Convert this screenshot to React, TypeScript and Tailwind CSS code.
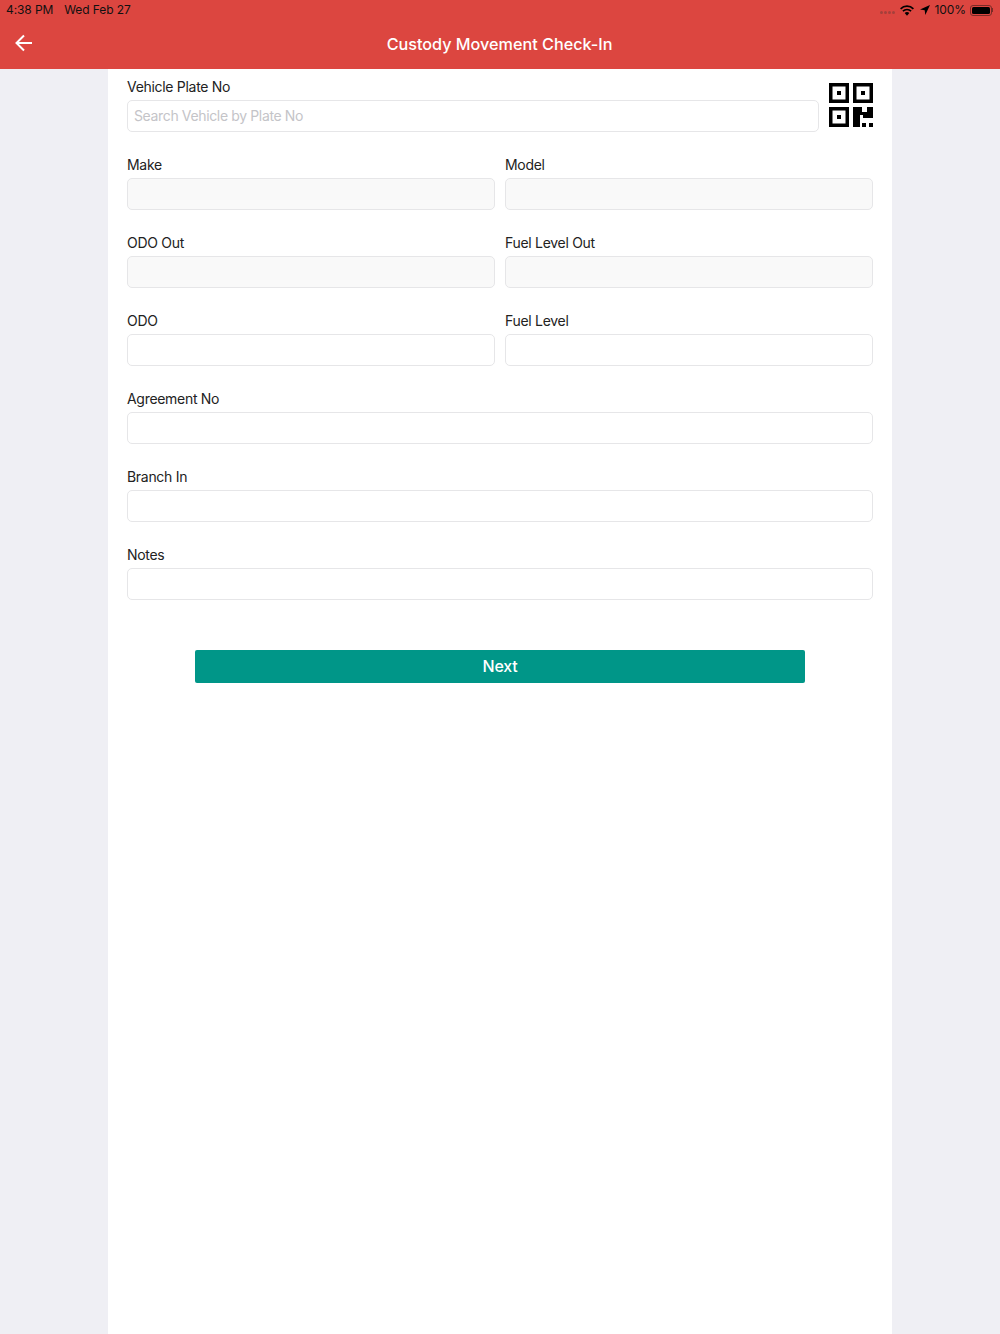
function Field({ label, className, disabled, placeholder }: {
  label: string;
  className?: string;
  disabled?: boolean;
  placeholder?: string;
}) {
  return (
    <div className={className}>
      <div className="h-[18px] text-[14px] leading-[18px] tracking-[-0.3px] text-[#222]">{label}</div>
      <div
        className={`mt-[4px] h-[32px] rounded-[5px] border border-[#e6e6e8] px-[6px] text-[14px] leading-[29px] tracking-[-0.36px] text-[#c4c4c8] ${disabled ? 'bg-[#f9f9f9]' : 'bg-white'}`}
      >
        {placeholder}
      </div>
    </div>
  );
}

function QrIcon() {
  return (
    <svg width="44" height="44" viewBox="0 0 44 44" className="shrink-0">
      <path fillRule="evenodd" d="M0 0h20v20H0zM3.500 3.500v13h13v-13z" />
      <rect x="8" y="8" width="4" height="4" />
      <path fillRule="evenodd" d="M24 0h20v20H24zM27.500 3.500v13h13v-13z" />
      <rect x="32" y="8" width="4" height="4" />
      <path fillRule="evenodd" d="M0 24h20v20H0zM3.500 27.500v13h13v-13z" />
      <rect x="8" y="32" width="4" height="4" />
      <path d="M24 24h9v5h5v-5h6v11H34v-3h-3v12h-7z" />
      <rect x="33" y="40" width="4" height="4" />
      <rect x="40" y="40" width="4" height="4" />
    </svg>
  );
}

export default function App() {
  return (
    <div className="flex min-h-[1334px] flex-col bg-[#efeff4] font-['Inter','Liberation_Sans',sans-serif]">
      {/* Header */}
      <div className="h-[69px] bg-[#dc4640] pl-[6px] pr-[7px]">
        <div className="flex h-[20px] items-center justify-between text-[12px] tracking-[-0.1px] text-[#111]">
          <div className="flex gap-[11px]">
            <span>4:38 PM</span>
            <span>Wed Feb 27</span>
          </div>
          <div className="flex items-center">
            <div className="mr-[5px] mt-[5px] flex gap-[1.5px]">
              <span className="h-[2.5px] w-[2.5px] rounded-full bg-[#a5403b]" />
              <span className="h-[2.5px] w-[2.5px] rounded-full bg-[#a5403b]" />
              <span className="h-[2.5px] w-[2.5px] rounded-full bg-[#a5403b]" />
              <span className="h-[2.5px] w-[2.5px] rounded-full bg-[#a5403b]" />
            </div>
            <svg width="14" height="11" viewBox="0 0 15 11" className="mr-[6px]">
              <path d="M7.500 11 5 8.300a3.500 3.500 0 0 1 5 0z" />
              <path d="M3.700 6.900 2.500 5.600a7 7 0 0 1 10 0l-1.200 1.300a5.300 5.300 0 0 0-7.600 0z" />
              <path d="M1.300 4.400 0 3a10.600 10.600 0 0 1 15 0l-1.300 1.400a8.800 8.800 0 0 0-12.400 0z" />
            </svg>
            <svg width="10" height="10" viewBox="0 0 10 10" className="mr-[5px]">
              <path d="M10 0 0 4.600l4.700.6.600 4.800z" />
            </svg>
            <span>100%</span>
            <div className="ml-[4px] flex items-center">
              <div className="h-[11px] w-[22px] rounded-[3px] border border-[#7a2b27] p-[1px]">
                <div className="h-full w-full rounded-[1.5px] bg-black" />
              </div>
              <div className="h-[4px] w-[1px] bg-[#7a2b27]" />
            </div>
          </div>
        </div>
        <div className="relative flex h-[49px] items-center justify-center">
          <svg width="20" height="20" viewBox="0 0 20 20" fill="none" stroke="white" strokeWidth="2" className="absolute left-[8px] top-[13px]">
            <path d="M18 10H3M10 2.500 2.500 10l7.500 7.500" />
          </svg>
          <span className="text-[16.2px] font-medium text-white">Custody Movement Check-In</span>
        </div>
      </div>

      {/* Form panel */}
      <div className="mx-auto flex w-[784px] flex-1 flex-col gap-[24px] bg-white px-[19px] pt-[9px]">
        <div className="flex items-end gap-[10px]">
          <Field label="Vehicle Plate No" placeholder="Search Vehicle by Plate No" className="flex-1" />
          <div className="mb-[5px] flex">
            <QrIcon />
          </div>
        </div>
        <div className="grid grid-cols-2 gap-[10px]">
          <Field label="Make" disabled />
          <Field label="Model" disabled />
        </div>
        <div className="grid grid-cols-2 gap-[10px]">
          <Field label="ODO Out" disabled />
          <Field label="Fuel Level Out" disabled />
        </div>
        <div className="grid grid-cols-2 gap-[10px]">
          <Field label="ODO" />
          <Field label="Fuel Level" />
        </div>
        <Field label="Agreement No" />
        <Field label="Branch In" />
        <Field label="Notes" />
        <button className="mx-auto mt-[26px] h-[33px] w-[610px] rounded-[2px] bg-[#009688] pb-[2px] text-[16px] font-medium tracking-[-0.2px] text-white">
          Next
        </button>
      </div>
    </div>
  );
}
